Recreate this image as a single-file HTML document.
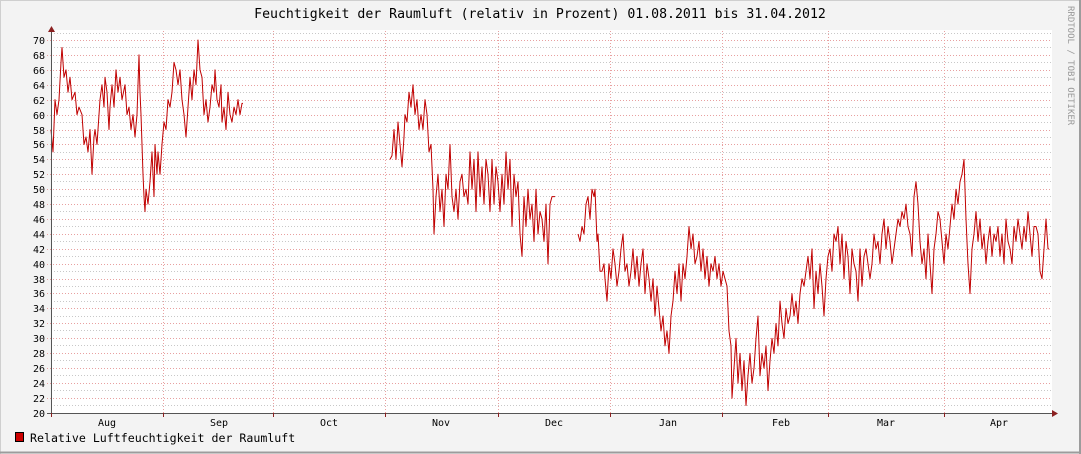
<!DOCTYPE html>
<html><head><meta charset="utf-8"><style>
html,body{margin:0;padding:0;background:#f3f3f3;}
svg{display:block;font-family:"DejaVu Sans Mono","Liberation Mono",monospace;}
</style></head><body>
<svg width="1081" height="454" viewBox="0 0 1081 454" xmlns="http://www.w3.org/2000/svg">
<rect x="0" y="0" width="1081" height="454" fill="#f3f3f3"/>
<line x1="0" y1="0.5" x2="1081" y2="0.5" stroke="#cfcfcf"/>
<line x1="0.5" y1="0" x2="0.5" y2="454" stroke="#cfcfcf"/>
<line x1="0" y1="452.5" x2="1081" y2="452.5" stroke="#9c9c9c" stroke-width="2"/>
<line x1="1080" y1="0" x2="1080" y2="454" stroke="#9c9c9c" stroke-width="2"/>
<rect x="51" y="30" width="1001" height="383" fill="#ffffff"/>
<text x="540" y="18" font-size="13.2" text-anchor="middle" fill="#000">Feuchtigkeit der Raumluft (relativ in Prozent) 01.08.2011 bis 31.04.2012</text>
<text transform="translate(1068,6) rotate(90)" font-size="9" fill="#999">RRDTOOL / TOBI OETIKER</text>
<g id="grid">
<g stroke="#c8c8c8" stroke-dasharray="1,2" stroke-width="1">
<line x1="51" y1="405.5" x2="1052" y2="405.5"/><line x1="51" y1="390.5" x2="1052" y2="390.5"/><line x1="51" y1="375.5" x2="1052" y2="375.5"/><line x1="51" y1="360.5" x2="1052" y2="360.5"/><line x1="51" y1="345.5" x2="1052" y2="345.5"/><line x1="51" y1="330.5" x2="1052" y2="330.5"/><line x1="51" y1="316.5" x2="1052" y2="316.5"/><line x1="51" y1="301.5" x2="1052" y2="301.5"/><line x1="51" y1="286.5" x2="1052" y2="286.5"/><line x1="51" y1="271.5" x2="1052" y2="271.5"/><line x1="51" y1="256.5" x2="1052" y2="256.5"/><line x1="51" y1="241.5" x2="1052" y2="241.5"/><line x1="51" y1="226.5" x2="1052" y2="226.5"/><line x1="51" y1="211.5" x2="1052" y2="211.5"/><line x1="51" y1="196.5" x2="1052" y2="196.5"/><line x1="51" y1="181.5" x2="1052" y2="181.5"/><line x1="51" y1="167.5" x2="1052" y2="167.5"/><line x1="51" y1="152.5" x2="1052" y2="152.5"/><line x1="51" y1="137.5" x2="1052" y2="137.5"/><line x1="51" y1="122.5" x2="1052" y2="122.5"/><line x1="51" y1="107.5" x2="1052" y2="107.5"/><line x1="51" y1="92.5" x2="1052" y2="92.5"/><line x1="51" y1="77.5" x2="1052" y2="77.5"/><line x1="51" y1="62.5" x2="1052" y2="62.5"/><line x1="51" y1="47.5" x2="1052" y2="47.5"/><line x1="51" y1="33.5" x2="1052" y2="33.5"/>
</g>
<g stroke="#e8a0a0" stroke-dasharray="1,2" stroke-width="1">
<line x1="47" y1="398.5" x2="1052" y2="398.5"/><line x1="47" y1="383.5" x2="1052" y2="383.5"/><line x1="47" y1="368.5" x2="1052" y2="368.5"/><line x1="47" y1="353.5" x2="1052" y2="353.5"/><line x1="47" y1="338.5" x2="1052" y2="338.5"/><line x1="47" y1="323.5" x2="1052" y2="323.5"/><line x1="47" y1="308.5" x2="1052" y2="308.5"/><line x1="47" y1="293.5" x2="1052" y2="293.5"/><line x1="47" y1="279.5" x2="1052" y2="279.5"/><line x1="47" y1="264.5" x2="1052" y2="264.5"/><line x1="47" y1="249.5" x2="1052" y2="249.5"/><line x1="47" y1="234.5" x2="1052" y2="234.5"/><line x1="47" y1="219.5" x2="1052" y2="219.5"/><line x1="47" y1="204.5" x2="1052" y2="204.5"/><line x1="47" y1="189.5" x2="1052" y2="189.5"/><line x1="47" y1="174.5" x2="1052" y2="174.5"/><line x1="47" y1="159.5" x2="1052" y2="159.5"/><line x1="47" y1="144.5" x2="1052" y2="144.5"/><line x1="47" y1="130.5" x2="1052" y2="130.5"/><line x1="47" y1="115.5" x2="1052" y2="115.5"/><line x1="47" y1="100.5" x2="1052" y2="100.5"/><line x1="47" y1="85.5" x2="1052" y2="85.5"/><line x1="47" y1="70.5" x2="1052" y2="70.5"/><line x1="47" y1="55.5" x2="1052" y2="55.5"/><line x1="47" y1="40.5" x2="1052" y2="40.5"/>
</g>
<g stroke="#e8a0a0" stroke-dasharray="1,2" stroke-width="1">
<line x1="163.5" y1="31" x2="163.5" y2="417"/><line x1="273.5" y1="31" x2="273.5" y2="417"/><line x1="385.5" y1="31" x2="385.5" y2="417"/><line x1="498.5" y1="31" x2="498.5" y2="417"/><line x1="610.5" y1="31" x2="610.5" y2="417"/><line x1="722.5" y1="31" x2="722.5" y2="417"/><line x1="828.5" y1="31" x2="828.5" y2="417"/><line x1="944.5" y1="31" x2="944.5" y2="417"/>
</g>
</g>
<g font-size="10" fill="#000" text-anchor="end">
<text x="45" y="417">20</text><text x="45" y="402">22</text><text x="45" y="387">24</text><text x="45" y="372">26</text><text x="45" y="357">28</text><text x="45" y="342">30</text><text x="45" y="327">32</text><text x="45" y="312">34</text><text x="45" y="297">36</text><text x="45" y="283">38</text><text x="45" y="268">40</text><text x="45" y="253">42</text><text x="45" y="238">44</text><text x="45" y="223">46</text><text x="45" y="208">48</text><text x="45" y="193">50</text><text x="45" y="178">52</text><text x="45" y="163">54</text><text x="45" y="148">56</text><text x="45" y="134">58</text><text x="45" y="119">60</text><text x="45" y="104">62</text><text x="45" y="89">64</text><text x="45" y="74">66</text><text x="45" y="59">68</text><text x="45" y="44">70</text>
</g>
<g font-size="10" fill="#000" text-anchor="middle">
<text x="107" y="426">Aug</text><text x="219" y="426">Sep</text><text x="329" y="426">Oct</text><text x="441" y="426">Nov</text><text x="554" y="426">Dec</text><text x="668" y="426">Jan</text><text x="781" y="426">Feb</text><text x="886" y="426">Mar</text><text x="999" y="426">Apr</text>
</g>
<g fill="none" stroke="#c00000" stroke-width="1" stroke-linejoin="round" transform="translate(0,413) scale(1,-7.46) translate(0,-20)">
<polyline vector-effect="non-scaling-stroke" points="51,58 53,55 55,62 57,60 59,62 61,67 62,69 64,65 66,66 68,63 70,65 72,62 75,63 77,60 79,61 82,60 84,56 86,57 88,55 90,58 92,52 94,57 95,58 97,56 99,60 100,62 102,64 104,61 105,65 107,63 109,58 110,61 112,64 114,61 116,66 118,63 120,65 122,62 125,64 127,60 129,61 131,58 133,60 135,57 137,60 139,68 140,63 141,60 142,56 143,52 144,49 145,47 146,50 148,48 150,51 152,55 154,49 155,56 157,52 158,55 160,52 162,56 164,59 166,58 168,62 170,61 172,63 174,67 176,66 178,64 180,66 182,62 184,60 186,57 188,61 190,65 192,62 194,66 196,64 198,70 200,66 202,65 204,60 206,62 208,59 210,61 212,64 214,63 215,66 217,62 219,61 221,64 222,59 224,61 226,58 228,63 230,60 232,59 234,61 236,60 238,62 240,60 242,61.5 243,61.5"/>
<polyline vector-effect="non-scaling-stroke" points="390,54 392,54.5 394,58 396,54 398,59 400,56 402,53 404,57 405,60 407,59 409,63 411,61 413,64 415,60 417,62 419,58 421,60 423,58 425,62 427,60 429,55 431,56 433,50 434,44 436,49 438,52 440,47 442,50 444,45 446,52 448,50 450,56 452,49 454,47 456,50 458,46 460,51 462,52 464,49 466,50 468,48 470,55 472,50 474,54 476,47 478,55 480,49 482,53 484,48 486,54 488,52 490,47 492,54 494,48 496,53 498,51 500,47 502,52 504,48 506,55 508,50 510,54 512,45 514,52 516,49 518,51 520,44 522,41 524,49 526,45 528,50 530,46 532,48 534,43 536,50 538,44 540,47 542,46 544,43 546,48 548,40 550,48 552,49 555,49"/>
<polyline vector-effect="non-scaling-stroke" points="578,44 580,43 582,45 584,44 586,48 588,49 590,46 592,50 594,49 595,50 597,43 598,44 600,39 602,39 604,40 605,38 607,35 609,40 611,38 613,42 615,40 617,37 619,39 621,42 623,44 625,39 627,40 629,37 631,39 633,42 635,38 637,41 639,37 641,40 643,42 645,36 647,40 649,38 651,35 653,38 655,33 657,37 659,34 661,31 663,33 665,29 667,31 669,28 671,33 673,35 675,39 677,36 679,40 681,35 683,40 685,38 687,41 689,45 691,42 693,44 695,40 697,41 699,43 701,39 703,42 705,38 707,41 709,37 711,40 713,39 715,41 717,38 719,40 721,37 723,39 725,38 727,37 729,31 731,29 732,22 734,26 736,30 738,24 740,28 742,23 744,27 746,21 748,25 750,28 752,24 754,26 756,30 758,33 760,25 762,28 764,26 766,29 768,23 770,27 772,30 774,28 776,32 778,29 780,35 782,32 784,30 786,34 788,32 790,33 792,36 794,33 796,35 798,32 800,36 802,38 804,37 806,39 808,41 810,38 812,42 814,34 816,39 818,36 820,40 822,37 824,33 826,38 828,41 830,42 832,39 834,44 836,43 838,45 840,40 842,44 844,38 846,43 848,41 850,36 852,42 854,40 856,39 858,35 860,42 862,37 864,41 866,42 868,40 870,38 872,40 874,44 876,42 878,43 880,40 882,44 884,46 886,42 888,45 890,43 892,40 894,42 896,44 898,46 900,45 902,47 904,46 906,48 908,45 910,44 912,41 914,49 916,51 918,48 920,43 922,40 924,42 926,38 928,44 930,40 932,36 934,42 936,44 938,47 940,46 942,43 944,40 946,44 948,42 950,45 952,48 954,46 956,50 958,48 960,51 962,52 964,54 966,46 968,40 970,36 972,42 974,44 976,47 978,43 980,46 982,42 984,44 986,40 988,43 990,45 992,41 994,44 996,43 998,45 1000,41 1002,44 1004,40 1006,46 1008,43 1010,42 1012,40 1014,45 1016,43 1018,46 1020,44 1022,42 1024,45 1026,43 1028,47 1030,44 1032,41 1034,45 1036,45 1038,44 1040,39 1042,38 1044,42 1046,46 1048,42 1049,42"/>
</g>
<g stroke="#555" stroke-width="1">
<line x1="51.5" y1="413" x2="51.5" y2="30"/>
<line x1="47" y1="413.5" x2="1055" y2="413.5"/>
</g>
<g stroke="#8b2020" stroke-width="1">
<line x1="51.5" y1="413" x2="51.5" y2="417"/><line x1="163.5" y1="413" x2="163.5" y2="417"/><line x1="273.5" y1="413" x2="273.5" y2="417"/><line x1="385.5" y1="413" x2="385.5" y2="417"/><line x1="498.5" y1="413" x2="498.5" y2="417"/><line x1="610.5" y1="413" x2="610.5" y2="417"/><line x1="722.5" y1="413" x2="722.5" y2="417"/><line x1="828.5" y1="413" x2="828.5" y2="417"/><line x1="944.5" y1="413" x2="944.5" y2="417"/>
</g>
<polygon points="48,32 55,32 51.5,26" fill="#8b2020"/>
<polygon points="1052,410 1052,417 1058,413.5" fill="#8b2020"/>
<rect x="15.5" y="432.5" width="8" height="9" fill="#cc0000" stroke="#000"/>
<text x="30" y="442" font-size="11.6" fill="#000">Relative Luftfeuchtigkeit der Raumluft</text>
</svg>
</body></html>
